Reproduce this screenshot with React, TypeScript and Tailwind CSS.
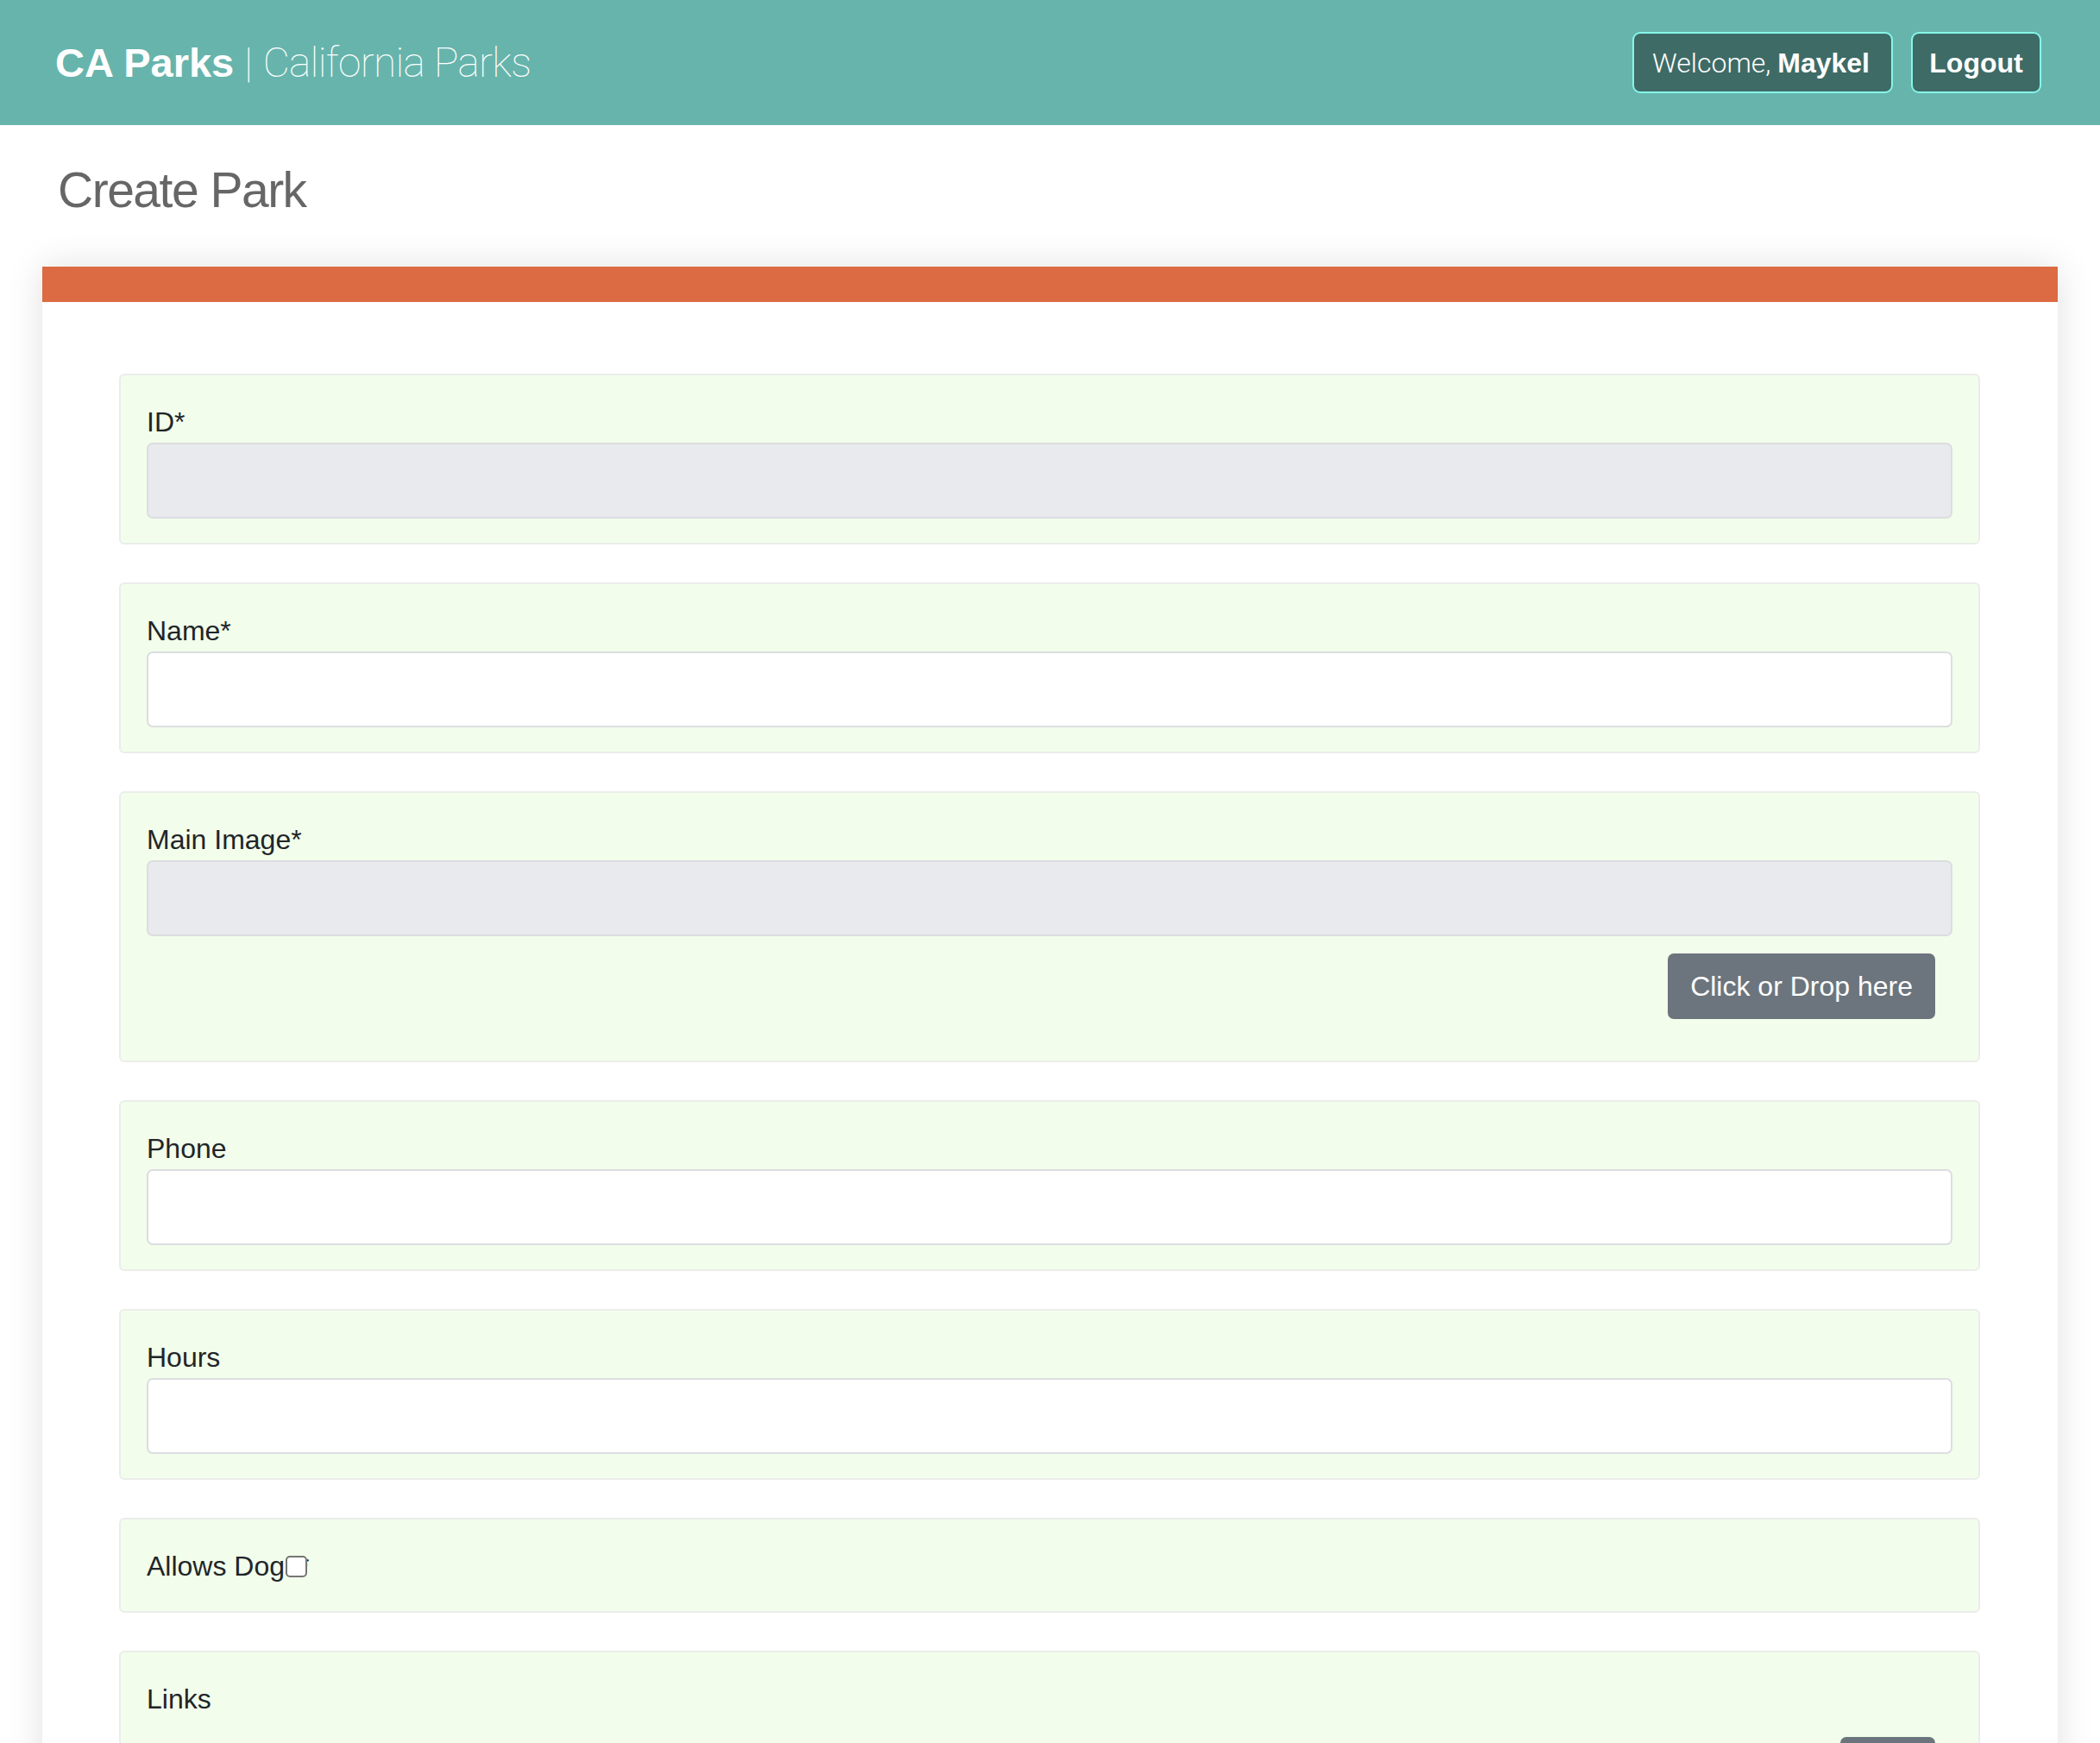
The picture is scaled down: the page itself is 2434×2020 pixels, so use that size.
import React from "react";

const sans = { fontFamily: '"Liberation Sans", Arial, sans-serif' };
const thin = { fontFamily: 'Roboto, "Liberation Sans", sans-serif' };

function Section({ children }: { children: React.ReactNode }) {
  return (
    <div className="rounded-[6px] border-2 border-[#ebedea] bg-[#f2feeb] px-[30px] pt-[30px] pb-[28px]">
      {children}
    </div>
  );
}

function Label({ children }: { children: React.ReactNode }) {
  return <label className="block text-[32px] leading-[48px] text-[#212529]">{children}</label>;
}

function Input({ disabled }: { disabled?: boolean }) {
  return (
    <div
      className={
        "h-[88px] w-full rounded-[7px] border-2 border-[#dcdde0] " +
        (disabled ? "bg-[#e9eaee]" : "bg-white")
      }
    />
  );
}

function GrayButton({ children, width }: { children?: React.ReactNode; width?: string }) {
  return (
    <div className="flex justify-end p-[20px]">
      <button
        className={
          "h-[76px] rounded-[7px] bg-[#6c757d] px-[26px] text-[32px] leading-[48px] text-white " +
          (width ?? "")
        }
      >
        {children}
      </button>
    </div>
  );
}

export default function App() {
  return (
    <div className="min-h-[2020px] w-[2434px] bg-white" style={sans}>
      <header className="flex h-[145px] items-center justify-between bg-[#67b4ac] pl-[64px] pr-[68px]">
        <div className="flex items-center text-white">
          <span className="text-[47px] font-bold leading-none">CA Parks</span>
          <span className="ml-[12px] text-[48px] font-thin leading-none" style={thin}>
            |
          </span>
          <span className="ml-[12px] text-[48px] font-thin leading-none tracking-[-0.8px]" style={thin}>
            California Parks
          </span>
        </div>
        <div className="flex items-center gap-[21px]">
          <div className="flex h-[71px] w-[302px] items-center justify-center rounded-[9px] border-2 border-[#86f6ea] bg-[#3e6b66] pr-[4px] text-[32px] text-white">
            <span className="font-light" style={thin}>
              Welcome,&nbsp;
            </span>
            <span className="font-bold">Maykel</span>
          </div>
          <div className="flex h-[71px] w-[151px] items-center justify-center rounded-[9px] border-2 border-[#86f6ea] bg-[#3e6b66] text-[32px] font-bold text-white">
            Logout
          </div>
        </div>
      </header>

      <div className="px-[49px]">
        <h1 className="mt-[41px] pl-[18px] text-[57px] leading-[68px] tracking-[-1.5px] text-[#666666]">
          Create Park
        </h1>

        <div className="mt-[55px] bg-white shadow-[0_0_40px_rgba(0,0,0,0.12)]">
          <div className="h-[41px] bg-[#dc6a42]" />
          <div className="flex flex-col gap-[44px] pl-[89px] pr-[90px] pt-[83px] pb-[60px]">
            <Section>
              <Label>ID*</Label>
              <Input disabled />
            </Section>
            <Section>
              <Label>Name*</Label>
              <Input />
            </Section>
            <Section>
              <Label>Main Image*</Label>
              <Input disabled />
              <GrayButton>Click or Drop here</GrayButton>
            </Section>
            <Section>
              <Label>Phone</Label>
              <Input />
            </Section>
            <Section>
              <Label>Hours</Label>
              <Input />
            </Section>
            <Section>
              <div className="relative inline-block">
                <Label>Allows Dogs*</Label>
                <input
                  type="checkbox"
                  className="absolute left-[161px] top-[12px] h-[25px] w-[25px] appearance-none rounded-[5px] border-2 border-[#767676] bg-white"
                />
              </div>
            </Section>
            <Section>
              <Label>Links</Label>
              <GrayButton width="w-[110px]" />
            </Section>
          </div>
        </div>
      </div>
    </div>
  );
}
